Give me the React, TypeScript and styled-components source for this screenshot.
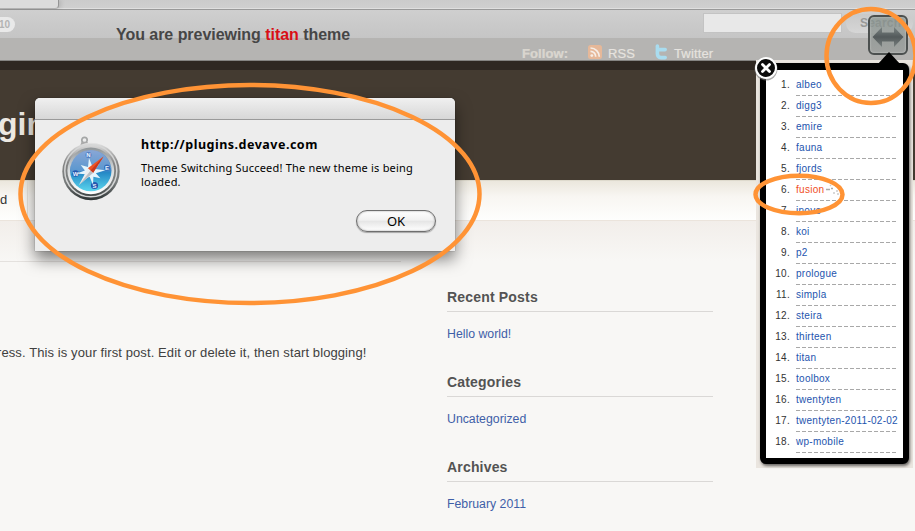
import React from "react";
import styled, { createGlobalStyle } from "styled-components";

const GlobalStyle = createGlobalStyle`
  * { box-sizing: border-box; }
  body { margin: 0; overflow: hidden; background: #f8f7f5; font-family: "Liberation Sans", Arial, sans-serif; }
  a { text-decoration: none; color: inherit; }
`;

const Page = styled.div`
  position: relative;
  width: 915px;
  height: 531px;
  overflow: hidden;
  display: flex;
  flex-direction: column;
`;

const TabStrip = styled.div`
  flex: none;
  height: 10px;
  background: linear-gradient(#cbcbcb, #d0d0d0);
  border-bottom: 1px solid #999;
  box-shadow: inset 0 -1px #dfdfdf;
`;

const Tab = styled.div`
  width: 59px;
  height: 9px;
  background: #dcdcdc;
  border-right: 1px solid #949494;
  border-bottom: 1px solid #b2b2b2;
  border-bottom-right-radius: 4px;
  box-shadow: 2px 0 4px rgba(0, 0, 0, 0.12);
`;

const PreviewBar = styled.header`
  flex: none;
  height: 51px;
  display: flex;
  align-items: flex-start;
  background: linear-gradient(#cfcfcf, #c5c5c5 28px, #b5b4b2 28px);
  border-bottom: 1px solid #858482;
`;

const Count = styled.span`
  flex: none;
  width: 15px;
  height: 15px;
  margin-top: 7px;
  border-radius: 0 8px 8px 0;
  background: #e9e9e9;
  color: #b3b3b3;
  font: bold 10px/15px "Liberation Sans", sans-serif;
  text-indent: -1px;
`;

const PreviewText = styled.h1`
  flex: none;
  margin: 15px 0 0 101px;
  width: 406px;
  font: bold 16px/20px "Liberation Sans", sans-serif;
  letter-spacing: -0.04px;
  color: #464646;
  white-space: nowrap;
  em { font-style: normal; color: #d90f16; }
`;

const Follow = styled.nav`
  flex: none;
  display: flex;
  align-items: center;
  height: 18px;
  width: 181px;
  margin-top: 34px;
  font-size: 13px;
  color: #e6e3df;
  -webkit-text-stroke: 0.2px #e6e3df;
  strong { flex: none; color: #d9d5ce; width: 66px; letter-spacing: 0.1px; }
  svg { flex: none; margin-top: -2px; }
`;

const FollowLink = styled.a<{ $space: number }>`
  flex: none;
  margin-left: 6px;
  width: ${(p) => p.$space}px;
  letter-spacing: 0.15px;
`;

const SearchField = styled.div`
  width: 139px;
  height: 20px;
  margin-top: 3px;
  background: #e8e8e8;
  border: 1px solid #c3c3c3;
  flex: none;
`;

const SearchButton = styled.div`
  flex: none;
  width: 67px;
  height: 19px;
  margin: 4px 0 0 4px;
  padding-left: 14px;
  border-radius: 10px;
  background: linear-gradient(#c9c9c9, #d6d6d6);
  font: bold 12px/18px "Liberation Sans", sans-serif;
  letter-spacing: 0.2px;
  color: #989998;
`;

const Hero = styled.section`
  flex: none;
  height: 119px;
  background: #443b31;
  border-top: 9px solid #2f2822;
`;

const SiteTitle = styled.h2`
  margin: 36px 0 0 -2px;
  font: bold 32px/37px "Liberation Sans", sans-serif;
  color: #ece8e2;
`;

const MenuBar = styled.nav`
  flex: none;
  height: 41px;
  display: flex;
  background: linear-gradient(#ebe7dd, #f8f6f2 40%, #fefefd);
  border-top: 1px solid #dedacd;
  border-bottom: 1px solid #ebe4dc;
`;

const MenuItem = styled.a`
  width: 28px;
  border-right: 1px solid #e5e2da;
  font-size: 13px;
  line-height: 38px;
  color: #333;
`;

const Content = styled.main`
  flex: 1;
  display: flex;
  background: linear-gradient(#f2eeea, #f8f7f5 40px);
`;

const Article = styled.article`
  width: 401px;
  margin-right: 46px;
  color: #404040;
`;

const ArticleRule = styled.div`
  height: 41px;
  border-bottom: 1px solid #e4e1de;
`;

const Paragraph = styled.p`
  margin: 81px 0 0 -3px;
  font-size: 13px;
  line-height: 20px;
  letter-spacing: 0.1px;
  white-space: nowrap;
`;

const Sidebar = styled.aside`
  width: 266px;
  padding-top: 66px;
`;

const Widget = styled.section`
  height: 85px;
  h3 {
    margin: 0 0 12px;
    height: 25px;
    font: bold 14px/20px "Liberation Sans", sans-serif;
    letter-spacing: 0.18px;
    color: #535353;
    border-bottom: 1px solid #dad8d6;
  }
  a {
    display: block;
    font-size: 12.3px;
    line-height: 20px;
    color: #3f5fa8;
  }
`;

const Dialog = styled.div`
  position: absolute;
  left: 35px;
  top: 98px;
  width: 420px;
  height: 153px;
  background: #ededed;
  border-radius: 5px 5px 0 0;
  box-shadow: 0 8px 16px rgba(0, 0, 0, 0.5), 0 0 1px rgba(0, 0, 0, 0.7);
`;

const DialogTitleBar = styled.div`
  height: 22px;
  border-radius: 5px 5px 0 0;
  background: linear-gradient(#f0f0f0, #d7d7d7);
  border-bottom: 1px solid #9a9a9a;
`;

const DialogBody = styled.div`
  display: flex;
  padding: 16px 19px 0 26px;
  font-family: "Noto Sans", "Lucida Grande", sans-serif;
  color: #000;
  svg { flex: none; }
`;

const DialogMessage = styled.div`
  flex: 1;
  display: flex;
  flex-direction: column;
  margin-left: 20px;
  h4 { margin: 0; font-size: 12.5px; line-height: 18px; letter-spacing: 0.5px; }
  p { margin: 7px 0 0; font-size: 11px; line-height: 14px; letter-spacing: 0.2px; }
`;

const OkButton = styled.button`
  align-self: flex-end;
  width: 80px;
  height: 22px;
  margin-top: 21px;
  padding: 0;
  border: 1px solid #6e6e6e;
  border-radius: 11px;
  background: linear-gradient(#fff, #f1f1f1 45%, #e6e6e6 52%, #fff);
  box-shadow: 0 1px 1px rgba(0, 0, 0, 0.3), inset 0 0 2px #999;
  font: 13px/19px "Noto Sans", "Lucida Grande", sans-serif;
  color: #000;
`;

const SwitchButton = styled.button`
  position: absolute;
  left: 868px;
  top: 15px;
  width: 40px;
  height: 40px;
  padding: 0;
  border: 2px solid #4c504f;
  border-radius: 6px;
  background: linear-gradient(rgba(130, 142, 137, 0.72), rgba(157, 160, 158, 0.9));
  box-shadow: inset 0 0 2px #d0d4d1;
  svg { display: block; margin: 4px 0 0 2px; }
`;

const Switcher = styled.div`
  position: absolute;
  left: 756px;
  top: 60px;
  width: 157px;
  height: 408px;
  padding: 3px 4px 4px;
  background: #eae5df;
`;

const SwitcherFrame = styled.div`
  height: 401px;
  border: 6px solid #000;
  border-top-width: 7px;
  border-radius: 6px;
  background: #fff;
  box-shadow: 1px 2px 3px rgba(0, 0, 0, 0.55);
`;

const Pointer = styled.svg`
  position: absolute;
  left: 121px;
  top: -8px;
`;

const CloseButton = styled.svg`
  position: absolute;
  left: -3px;
  top: -5px;
`;

const ThemeList = styled.ol`
  margin: 0;
  padding: 5px 5px 0 6px;
  list-style: none;
`;

const ThemeRow = styled.li<{ $active: boolean }>`
  display: flex;
  height: 21px;
  font-size: 10px;
  line-height: 20px;
  letter-spacing: 0.27px;
  color: #333;
  span { width: 18px; text-align: right; margin-right: 6px; }
  a {
    flex: 1;
    height: 21px;
    white-space: nowrap;
    color: ${(p) => (p.$active ? "#f04e23" : "#1d54ae")};
    background: repeating-linear-gradient(90deg, #a8a8a8 0 4px, transparent 4px 6px) bottom / 100% 1px no-repeat;
  }
  svg { margin-left: 1px; vertical-align: middle; }
`;

const Annotations = styled.svg`
  position: absolute;
  left: 0;
  top: 0;
  pointer-events: none;
`;

const themes = [
  "albeo", "digg3", "emire", "fauna", "fjords", "fusion", "inove", "koi", "p2", "prologue",
  "simpla", "steira", "thirteen", "titan", "toolbox", "twentyten", "twentyten-2011-02-02", "wp-mobile",
];

const widgets = [
  { title: "Recent Posts", link: "Hello world!" },
  { title: "Categories", link: "Uncategorized" },
  { title: "Archives", link: "February 2011" },
];

const RssIcon = () => (
  <svg width="14" height="14" viewBox="0 0 14 14">
    <rect width="14" height="14" rx="2.5" fill="#e6b899" />
    <g fill="none" stroke="#f6eee8" strokeWidth="1.7">
      <path d="M2.5 6.3a5.2 5.2 0 0 1 5.2 5.4M2.5 3a8.8 8.8 0 0 1 8.8 8.8" />
    </g>
    <circle cx="3.8" cy="10.6" r="1.4" fill="#f6eee8" />
  </svg>
);

const TwitterIcon = () => (
  <svg width="13" height="16" viewBox="0 0 13 16">
    <path d="M2.4 2v7.5Q2.4 13.6 6 13.6H10.2M2.4 5.6H10.2" fill="none" stroke="#a9dcef" strokeWidth="3.6" strokeLinecap="round" />
  </svg>
);

const CompassIcon = () => (
  <svg width="60" height="66" viewBox="0 0 60 66">
    <defs>
      <linearGradient id="rim" x1="0" y1="0" x2="0" y2="1">
        <stop offset="0" stopColor="#e4e4e4" />
        <stop offset=".35" stopColor="#858585" />
        <stop offset=".7" stopColor="#777b7b" />
        <stop offset="1" stopColor="#2d3334" />
      </linearGradient>
      <linearGradient id="bezel" x1="0" y1="0" x2="0" y2="1">
        <stop offset="0" stopColor="#8f9598" />
        <stop offset=".5" stopColor="#d9dcdd" />
        <stop offset="1" stopColor="#fff" />
      </linearGradient>
      <linearGradient id="dial" x1="0" y1="0" x2="0" y2="1">
        <stop offset="0" stopColor="#7396ce" />
        <stop offset=".5" stopColor="#3d84c6" />
        <stop offset=".55" stopColor="#2589c6" />
        <stop offset="1" stopColor="#5bd5ed" />
      </linearGradient>
    </defs>
    <circle cx="23.5" cy="4" r="2.7" fill="none" stroke="#a5a7a7" strokeWidth="1.7" />
    <path d="M20.5 6h6l1.5 4h-9z" fill="#aaa" />
    <circle cx="30" cy="35.5" r="28.7" fill="url(#rim)" />
    <circle cx="29.8" cy="34.8" r="26" fill="none" stroke="#d5d6d6" strokeWidth="1.5" />
    <circle cx="29.8" cy="34.8" r="23.4" fill="url(#bezel)" />
    <circle cx="29.8" cy="34.6" r="20.7" fill="url(#dial)" />
    <path d="M9.5 38Q22 33 30 35T50 32a20.7 20.7 0 0 0-40-4z" fill="#fff" opacity=".16" />
    <g fill="#2457af">
      <circle cx="27.5" cy="19" r="3" opacity=".5" />
      <circle cx="14.5" cy="37.5" r="3.3" />
      <circle cx="33.5" cy="49.5" r="3.6" />
      <circle cx="46" cy="31.5" r="3" opacity=".7" />
    </g>
    <g fill="#e9f4ff" fontSize="6" fontWeight="700" fontFamily="Liberation Sans, sans-serif" textAnchor="middle">
      <text x="27.5" y="21">N</text>
      <text x="33.5" y="51.7">S</text>
      <text x="14.5" y="39.8">W</text>
      <text x="46" y="33.7">E</text>
    </g>
    <path d="M28 22l3.2 8 7-2-4 5 10 1.2-9.3 3 4.5 5-7-1.5-.4 8-3.4-8-7 3 3-5.5-9-.7 8.3-3-4.2-5.5 7.3 2z" fill="#e5f5fc" />
    <path d="M42.5 20.5L26.8 32.2l5.2 4.9z" fill="#ed5424" />
    <path d="M42.5 20.5L29.3 34.7 32 37.1z" fill="#c8381d" />
    <path d="M26.8 32.2l5.2 4.9L18 49z" fill="#eceeef" />
    <path d="M29.4 34.7l2.6 2.4L18 49z" fill="#b9c0c5" />
  </svg>
);

const App = () => (
  <>
    <GlobalStyle />
    <Page>
      <TabStrip><Tab /></TabStrip>
      <PreviewBar>
        <Count>10</Count>
        <PreviewText>You are previewing <em>titan</em> theme</PreviewText>
        <Follow>
          <strong>Follow:</strong>
          <RssIcon />
          <FollowLink $space={47}>RSS</FollowLink>
          <TwitterIcon />
          <FollowLink $space={40}>Twitter</FollowLink>
        </Follow>
        <SearchField />
        <SearchButton>Search</SearchButton>
      </PreviewBar>
      <Hero><SiteTitle>gin</SiteTitle></Hero>
      <MenuBar><MenuItem>d</MenuItem></MenuBar>
      <Content>
        <Article>
          <ArticleRule />
          <Paragraph>ress. This is your first post. Edit or delete it, then start blogging!</Paragraph>
        </Article>
        <Sidebar>
          {widgets.map((w) => (
            <Widget key={w.title}>
              <h3>{w.title}</h3>
              <a>{w.link}</a>
            </Widget>
          ))}
        </Sidebar>
      </Content>

      <Dialog>
        <DialogTitleBar />
        <DialogBody>
          <CompassIcon />
          <DialogMessage>
            <h4>http://plugins.devave.com</h4>
            <p>Theme Switching Succeed! The new theme is being<br />loaded.</p>
            <OkButton>OK</OkButton>
          </DialogMessage>
        </DialogBody>
      </Dialog>

      <SwitchButton aria-label="Switch theme">
        <svg width="32" height="28" viewBox="0 0 32 28">
          <defs>
            <linearGradient id="arrow" x1="0" y1="0" x2="0" y2="1">
              <stop offset="0" stopColor="#7b8483" />
              <stop offset=".5" stopColor="#535a5b" />
              <stop offset="1" stopColor="#777e7d" />
            </linearGradient>
          </defs>
          <path d="M0.5 14L10 4v5.5h12V4l9.5 10L22 24v-5.5H10V24z" fill="url(#arrow)" />
        </svg>
      </SwitchButton>

      <Switcher>
        <SwitcherFrame>
          <ThemeList>
            {themes.map((name, i) => (
              <ThemeRow key={name} $active={name === "fusion"}>
                <span>{i + 1}.</span>
                <a>
                  {name}
                  {name === "fusion" && (
                    <svg width="16" height="14" viewBox="0 0 16 14">
                      <path d="M1 6.5h4M6 5.5h2" stroke="#aaa" strokeWidth="1.6" />
                      <path d="M5 3l1-1M8 10h2M11 8h2M12 11h2" stroke="#ccc" strokeWidth="1.4" />
                    </svg>
                  )}
                </a>
              </ThemeRow>
            ))}
          </ThemeList>
        </SwitcherFrame>
        <Pointer width="24" height="14" viewBox="0 0 24 14"><path d="M0 13L12 0l12 13z" /></Pointer>
        <CloseButton width="26" height="27" viewBox="0 0 26 27">
          <circle cx="13" cy="14" r="11.5" fill="#777" opacity=".6" />
          <circle cx="13" cy="13" r="10" fill="#0c0c0c" stroke="#fff" strokeWidth="2" />
          <path d="M9.5 9.5l7 7m0-7l-7 7" stroke="#fff" strokeWidth="2.8" strokeLinecap="round" />
        </CloseButton>
      </Switcher>

      <Annotations width="915" height="531" viewBox="0 0 915 531" fill="none" stroke="#ff9335" strokeWidth="4.5">
        <ellipse cx="250" cy="194" rx="229.5" ry="109" />
        <ellipse cx="871" cy="56" rx="44.5" ry="47" />
        <ellipse cx="799" cy="194.5" rx="43.5" ry="18.7" />
      </Annotations>
    </Page>
  </>
);

export default App;
